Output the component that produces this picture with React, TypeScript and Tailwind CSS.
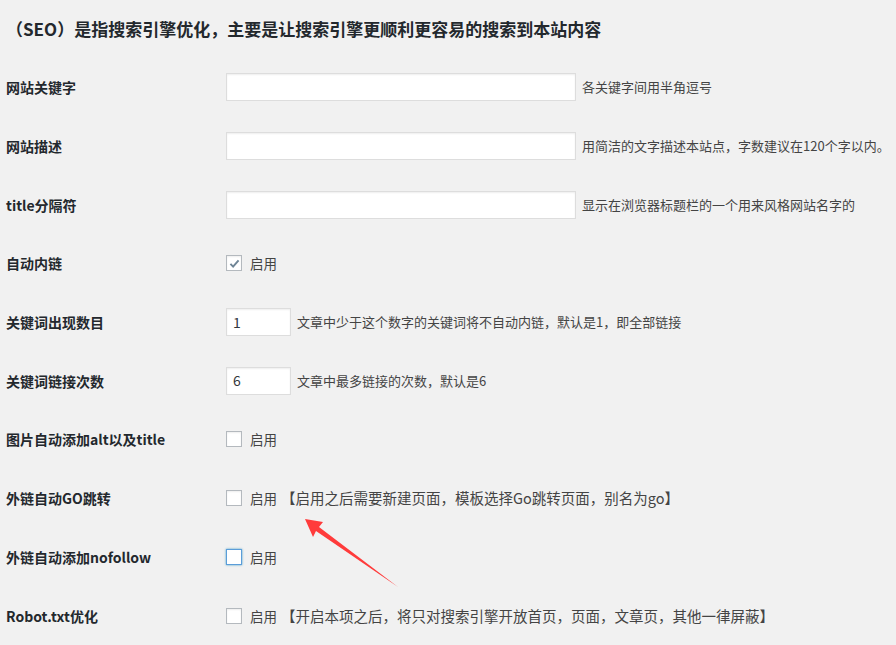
import React from 'react'

type Row =
  | { kind: 'text'; label: string; desc: string }
  | { kind: 'number'; label: string; value: string; desc: string }
  | { kind: 'check'; label: string; checked?: boolean; focused?: boolean; note?: string }

const rows: Row[] = [
  { kind: 'text', label: '网站关键字', desc: '各关键字间用半角逗号' },
  { kind: 'text', label: '网站描述', desc: '用简洁的文字描述本站点，字数建议在120个字以内。' },
  { kind: 'text', label: 'title分隔符', desc: '显示在浏览器标题栏的一个用来风格网站名字的' },
  { kind: 'check', label: '自动内链', checked: true },
  { kind: 'number', label: '关键词出现数目', value: '1', desc: '文章中少于这个数字的关键词将不自动内链，默认是1，即全部链接' },
  { kind: 'number', label: '关键词链接次数', value: '6', desc: '文章中最多链接的次数，默认是6' },
  { kind: 'check', label: '图片自动添加alt以及title' },
  { kind: 'check', label: '外链自动GO跳转', note: '【启用之后需要新建页面，模板选择Go跳转页面，别名为go】' },
  { kind: 'check', label: '外链自动添加nofollow', focused: true },
  { kind: 'check', label: 'Robot.txt优化', note: '【开启本项之后，将只对搜索引擎开放首页，页面，文章页，其他一律屏蔽】' },
]

function Checkbox({ checked, focused }: { checked?: boolean; focused?: boolean }) {
  return (
    <span
      className={`flex items-center justify-center w-4 h-4 shrink-0 bg-white border ${
        focused
          ? 'border-[#5b9dd9] shadow-[0_0_2px_rgba(30,140,190,0.8)]'
          : 'border-[#b4b9be] shadow-[inset_0_1px_2px_rgba(0,0,0,0.07)]'
      }`}
    >
      {checked && (
        <svg viewBox="0 0 16 16" className="w-[13px] h-[13px]">
          <path d="M3 8.5 L6.3 11.8 L13 4.2" fill="none" stroke="#6f8596" strokeWidth="2.4" />
        </svg>
      )}
    </span>
  )
}

function SettingRow({ row }: { row: Row }) {
  return (
    <div className="flex items-center h-[58.7px]">
      <div className="w-[220px] shrink-0 text-[14px] font-bold text-[#23282d] leading-5">{row.label}</div>
      {row.kind === 'text' && (
        <div className="flex items-center gap-[6px]">
          <div className="w-[350px] h-[28px] bg-white border border-[#dddddd] shadow-[inset_0_1px_2px_rgba(0,0,0,0.07)]" />
          <span className="text-[13px] text-[#444] leading-5 whitespace-nowrap">{row.desc}</span>
        </div>
      )}
      {row.kind === 'number' && (
        <div className="flex items-center gap-[6px]">
          <div className="w-[65px] h-[28px] bg-white border border-[#dddddd] shadow-[inset_0_1px_2px_rgba(0,0,0,0.07)] flex items-center pl-[6px] text-[14px] text-[#32373c]">
            {row.value}
          </div>
          <span className="text-[13px] text-[#444] leading-5 whitespace-nowrap">{row.desc}</span>
        </div>
      )}
      {row.kind === 'check' && (
        <div className="flex items-center gap-2">
          <Checkbox checked={row.checked} focused={row.focused} />
          <span className="text-[13.5px] text-[#444] leading-5 whitespace-nowrap">启用</span>
          {row.note && (
            <span className="-ml-[4px] text-[14.5px] text-[#444] leading-5 whitespace-nowrap">{row.note}</span>
          )}
        </div>
      )}
    </div>
  )
}

export default function App() {
  return (
    <div className="relative w-[896px] h-[645px] overflow-hidden bg-[#f1f1f1] font-['Noto_Sans_CJK_SC','Noto_Sans',sans-serif] pl-[6px]">
      <h2 className="h-[58px] flex items-center text-[17px] font-bold text-[#23282d] leading-6">
        （SEO）是指搜索引擎优化，主要是让搜索引擎更顺利更容易的搜索到本站内容
      </h2>
      <div className="flex flex-col">
        {rows.map(r => (
          <SettingRow key={r.label} row={r} />
        ))}
      </div>

      {/* annotation arrow */}
      <svg className="absolute left-[300px] top-[512px] w-[105px] h-[80px] pointer-events-none" viewBox="0 0 105 80">
        <polygon points="5,7 23,10 19,15 98,75 16,19 13,25" fill="#ff3b3b" />
      </svg>
    </div>
  )
}
